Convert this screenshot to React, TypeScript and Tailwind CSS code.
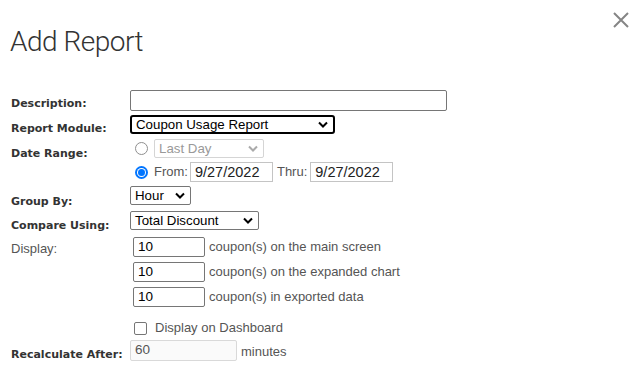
import React from "react";

const labelCls =
  "w-[119px] shrink-0 font-['DejaVu_Sans',sans-serif] text-[11px] font-bold text-[#333]";

function Chevron({ muted }: { muted?: boolean }) {
  return (
    <svg width="10" height="7" viewBox="0 0 10 7" className="shrink-0">
      <path
        d="M1 1.5 L5 5.5 L9 1.5"
        fill="none"
        stroke={muted ? "#aaa" : "#000"}
        strokeWidth="2"
      />
    </svg>
  );
}

function FakeSelect({
  value,
  width,
  height,
  focused,
  muted,
}: {
  value: string;
  width: string;
  height: string;
  focused?: boolean;
  muted?: boolean;
}) {
  return (
    <div
      className={`flex items-center justify-between pl-[4px] pr-[5px] text-[13.3px] ${width} ${height} ${
        focused
          ? "rounded-[3px] border-2 border-black pl-[3px] text-black"
          : muted
            ? "rounded-[2px] border border-[#d5d5d5] text-[#999]"
            : "rounded-[2px] border border-[#767676] text-black"
      }`}
    >
      <span className="leading-none">{value}</span>
      <Chevron muted={muted} />
    </div>
  );
}

function Radio({ checked }: { checked?: boolean }) {
  return checked ? (
    <span className="flex h-[13px] w-[13px] items-center justify-center rounded-full bg-[#0075ff]">
      <span className="flex h-[9px] w-[9px] items-center justify-center rounded-full bg-white">
        <span className="h-[7px] w-[7px] rounded-full bg-[#0075ff]" />
      </span>
    </span>
  ) : (
    <span className="h-[13px] w-[13px] rounded-full border border-[#8f8f8f]" />
  );
}

function TextBox({
  value,
  className,
}: {
  value: string;
  className: string;
}) {
  return (
    <div className={`flex items-center pl-[4px] ${className}`}>{value}</div>
  );
}

export default function App() {
  return (
    <div className="h-[371px] w-[639px] overflow-hidden bg-white font-['Liberation_Sans',Arial,sans-serif]">
      <div className="flex items-start justify-between pl-[10px] pr-[10px]">
        <h1 className="mt-[28px] font-['Roboto',sans-serif] text-[28px] font-light leading-none tracking-[-0.5px] text-[#333]">
          Add Report
        </h1>
        <svg width="16" height="16" viewBox="0 0 16 16" className="mt-[12px]">
          <path d="M1 1 L15 15 M15 1 L1 15" stroke="#858585" strokeWidth="2" />
        </svg>
      </div>

      <div className="mt-[34px] flex flex-col pl-[11px]">
        {/* Description */}
        <div className="flex h-[21px] items-start">
          <span className={`${labelCls} pt-[6px]`}>Description:</span>
          <div className="h-[21px] w-[317px] rounded-[2px] border border-[#767676]" />
        </div>

        {/* Report Module */}
        <div className="mt-[4px] flex h-[19px] items-start">
          <span className={`${labelCls} pt-[6px]`}>Report Module:</span>
          <FakeSelect
            value="Coupon Usage Report"
            width="w-[205px]"
            height="h-[19px]"
            focused
          />
        </div>

        {/* Date Range */}
        <div className="mt-[5px] flex items-start">
          <span className={`${labelCls} pt-[7px]`}>Date Range:</span>
          <div className="flex flex-col gap-[4px]">
            <div className="flex h-[19px] items-center">
              <span className="ml-[5px] mr-[6px] flex">
                <Radio />
              </span>
              <FakeSelect
                value="Last Day"
                width="w-[110px]"
                height="h-[19px]"
                muted
              />
            </div>
            <div className="flex h-[20px] items-center text-[13px] text-[#555]">
              <span className="ml-[5px] mr-[6px] flex">
                <Radio checked />
              </span>
              <span className="mr-[2px]">From:</span>
              <TextBox
                value="9/27/2022"
                className="h-[20px] w-[83px] border border-[#c4c4c4] pt-[2px] text-[14.5px] text-[#222]"
              />
              <span className="ml-[4px] mr-[3px]">Thru:</span>
              <TextBox
                value="9/27/2022"
                className="h-[20px] w-[83px] border border-[#c4c4c4] pt-[2px] text-[14.5px] text-[#222]"
              />
            </div>
          </div>
        </div>

        {/* Group By */}
        <div className="mt-[4px] flex h-[19px] items-start">
          <span className={`${labelCls} pt-[8px]`}>Group By:</span>
          <FakeSelect value="Hour" width="w-[61px]" height="h-[19px]" />
        </div>

        {/* Compare Using */}
        <div className="mt-[6px] flex h-[19px] items-start">
          <span className={`${labelCls} pt-[7px]`}>Compare Using:</span>
          <FakeSelect value="Total Discount" width="w-[129px]" height="h-[19px]" />
        </div>

        {/* Display */}
        <div className="mt-[7px] flex items-start">
          <span className="w-[119px] shrink-0 pt-[2px] text-[13px] text-[#555]">
            Display:
          </span>
          <div className="flex flex-col gap-[5px] pl-[3px]">
            {[
              "coupon(s) on the main screen",
              "coupon(s) on the expanded chart",
              "coupon(s) in exported data",
            ].map((t) => (
              <div key={t} className="flex h-[20px] items-center text-[13px] text-[#555]">
                <TextBox
                  value="10"
                  className="mr-[4px] h-[20px] w-[72px] rounded-[2px] border border-[#767676] text-[13.5px] text-black"
                />
                {t}
              </div>
            ))}
          </div>
        </div>

        {/* Dashboard */}
        <div className="mt-[13px] flex h-[16px] items-center pl-[123px] text-[13px] text-[#555]">
          <span className="mr-[8px] h-[13px] w-[13px] rounded-[2px] border border-[#767676]" />
          Display on Dashboard
        </div>

        {/* Recalculate */}
        <div className="mt-[4px] flex h-[21px] items-start">
          <span className={`${labelCls} pt-[7px]`}>Recalculate After:</span>
          <TextBox
            value="60"
            className="h-[21px] w-[107px] rounded-[2px] border border-[#d9d9d9] bg-[#fafafa] text-[13.5px] text-[#555]"
          />
          <span className="ml-[4px] pt-[2px] text-[13px] text-[#555]">minutes</span>
        </div>
      </div>
    </div>
  );
}
